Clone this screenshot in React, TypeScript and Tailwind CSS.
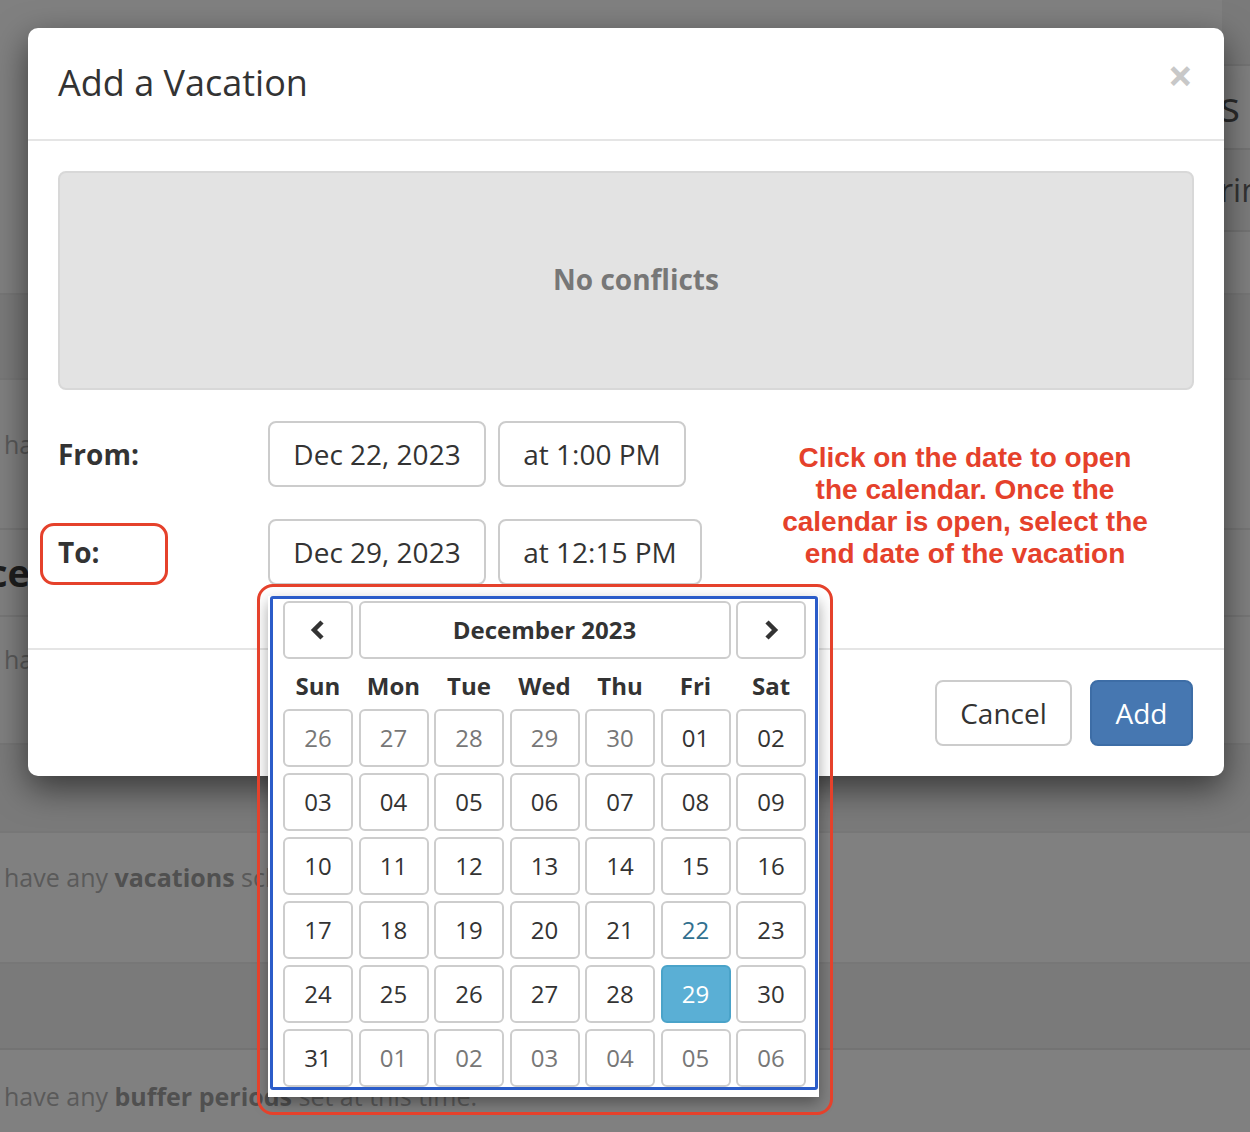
import React from 'react';

type Day = { n: string; muted?: boolean; from?: boolean; active?: boolean };

const weeks: Day[][] = [
  [{ n: '26', muted: true }, { n: '27', muted: true }, { n: '28', muted: true }, { n: '29', muted: true }, { n: '30', muted: true }, { n: '01' }, { n: '02' }],
  [{ n: '03' }, { n: '04' }, { n: '05' }, { n: '06' }, { n: '07' }, { n: '08' }, { n: '09' }],
  [{ n: '10' }, { n: '11' }, { n: '12' }, { n: '13' }, { n: '14' }, { n: '15' }, { n: '16' }],
  [{ n: '17' }, { n: '18' }, { n: '19' }, { n: '20' }, { n: '21' }, { n: '22', from: true }, { n: '23' }],
  [{ n: '24' }, { n: '25' }, { n: '26' }, { n: '27' }, { n: '28' }, { n: '29', active: true }, { n: '30' }],
  [{ n: '31' }, { n: '01', muted: true }, { n: '02', muted: true }, { n: '03', muted: true }, { n: '04', muted: true }, { n: '05', muted: true }, { n: '06', muted: true }],
];

const dayNames = ['Sun', 'Mon', 'Tue', 'Wed', 'Thu', 'Fri', 'Sat'];

function Chevron({ dir }: { dir: 'left' | 'right' }) {
  return (
    <svg width="16" height="22" viewBox="0 0 16 22">
      <polyline
        points={dir === 'left' ? '12,3 4,11 12,19' : '4,3 12,11 4,19'}
        fill="none"
        stroke="#333"
        strokeWidth="4.5"
        strokeLinejoin="miter"
      />
    </svg>
  );
}

function DayCell({ d }: { d: Day }) {
  let cls = 'border-[#cdcdcd] bg-white text-[#333]';
  if (d.muted) cls = 'border-[#cdcdcd] bg-white text-[#777]';
  if (d.from) cls = 'border-[#cdcdcd] bg-white text-[#31708f]';
  if (d.active) cls = 'border-[#4aa3c9] bg-[#5aafd5] text-white';
  return (
    <div className={`h-[58px] flex items-center justify-center rounded-[6px] border-2 text-[24px] ${cls}`}>
      {d.n}
    </div>
  );
}

function Calendar() {
  return (
    <div className="absolute left-[268px] top-[596px] w-[551px] bg-white pb-[7px] shadow-[0_6px_14px_rgba(0,0,0,0.35)]">
      <div className="ml-[2px] mr-[1px] border-[3px] border-[#2b5cc9] rounded-[3px] pt-[2px] pl-[10px] pr-[9px] pb-0">
        <div className="grid grid-cols-7 gap-x-[5.5px]">
          <div className="h-[58px] flex items-center justify-center rounded-[6px] border-2 border-[#cdcdcd]">
            <Chevron dir="left" />
          </div>
          <div className="col-span-5 h-[58px] flex items-center justify-center rounded-[6px] border-2 border-[#cdcdcd] text-[24px] font-bold text-[#333]">
            December 2023
          </div>
          <div className="h-[58px] flex items-center justify-center rounded-[6px] border-2 border-[#cdcdcd]">
            <Chevron dir="right" />
          </div>
        </div>
        <div className="grid grid-cols-7 gap-x-[5.5px] h-[50px] items-center">
          {dayNames.map((n) => (
            <div key={n} className="text-center text-[24px] font-bold text-[#333] pt-[3px]">{n}</div>
          ))}
        </div>
        <div className="grid grid-cols-7 gap-x-[5.5px] gap-y-[6px]">
          {weeks.flat().map((d, i) => (
            <DayCell key={i} d={d} />
          ))}
        </div>
      </div>
    </div>
  );
}

function Backdrop() {
  return (
    <div className="w-full bg-[#808080] text-[#5a5a5a] text-[25px]">
      {/* row 1 */}
      <div className="h-[295px] border-b-2 border-[#777] flex justify-end">
        <div className="w-[28px] flex flex-col">
          <div className="h-[66px] border-b-2 border-[#747474] bg-[#7a7a7a]" />
          <div className="h-[84px] border-b-2 border-[#747474] flex items-center text-[42px] text-[#2b2b2b] leading-none pb-[2px] -ml-[2px] overflow-hidden">s</div>
          <div className="h-[82px] border-b-2 border-[#747474] flex items-center text-[32px] text-[#333] -ml-[2px] overflow-hidden whitespace-nowrap bg-[#7c7c7c]">rin</div>
        </div>
      </div>
      <div className="h-[85px] border-b-2 border-[#777] bg-[#7a7a7a]" />
      <div className="h-[150px] border-b-2 border-[#777] flex items-center pl-[4px] pb-[18px] whitespace-nowrap overflow-hidden">have any</div>
      <div className="h-[87px] border-b-2 border-[#777] flex items-center whitespace-nowrap overflow-hidden">
        <div className="w-[30px] flex justify-end overflow-hidden text-[38px] font-bold text-[#1e1e1e]">Preference</div>
      </div>
      <div className="h-[128px] border-b-2 border-[#777] flex items-start pt-[24px] pl-[4px] whitespace-nowrap overflow-hidden">have any</div>
      <div className="h-[88px] border-b-2 border-[#777] bg-[#7a7a7a]" />
      <div className="h-[131px] border-b-2 border-[#777] flex items-start pt-[26px] pl-[4px] whitespace-nowrap overflow-hidden">
        have any&nbsp;<b className="text-[#505050]">vacations</b>&nbsp;scheduled at this time.
      </div>
      <div className="h-[86px] border-b-2 border-[#737373] bg-[#7a7a7a]" />
      <div className="h-[82px] flex items-start pt-[28px] pl-[4px] whitespace-nowrap overflow-hidden">
        have any&nbsp;<b className="text-[#505050]">buffer periods</b>&nbsp;set at this time.
      </div>
    </div>
  );
}

export default function App() {
  return (
    <div className="relative w-[1250px] h-[1132px] overflow-hidden" style={{ fontFamily: '"Open Sans", "Noto Sans", sans-serif' }}>
      <Backdrop />

      {/* modal */}
      <div className="absolute left-[28px] top-[28px] w-[1196px] bg-white rounded-[10px] shadow-[0_12px_34px_rgba(0,0,0,0.55)] text-[#333]">
        <div className="h-[113px] border-b-2 border-[#e5e5e5] flex items-center justify-between pl-[30px] pr-[30px] pb-[2px]">
          <h2 className="text-[36px] leading-none text-[#333]">Add a Vacation</h2>
          <span className="text-[44px] font-bold text-[#c8c8c8] leading-none -mt-[16px] mr-[1px]">×</span>
        </div>

        <div className="px-[30px] pt-[30px] pb-[63px]">
          <div className="h-[219px] rounded-[8px] border-2 border-[#d8d8d8] bg-[#e3e3e3] flex items-center justify-center text-[28px] font-bold text-[#777] pb-[4px] pl-[20px]">
            No conflicts
          </div>

          <div className="mt-[31px] flex items-center">
            <div className="w-[210px] text-[28px] font-bold">From:</div>
            <div className="flex gap-[12px]">
              <div className="w-[218px] h-[66px] border-2 border-[#ccc] rounded-[8px] flex items-center justify-center text-[28px]">Dec 22, 2023</div>
              <div className="w-[188px] h-[66px] border-2 border-[#ccc] rounded-[8px] flex items-center justify-center text-[28px]">at 1:00 PM</div>
            </div>
          </div>

          <div className="mt-[32px] flex items-center">
            <div className="w-[210px] text-[28px] font-bold">To:</div>
            <div className="flex gap-[12px]">
              <div className="w-[218px] h-[66px] border-2 border-[#ccc] rounded-[8px] flex items-center justify-center text-[28px]">Dec 29, 2023</div>
              <div className="w-[204px] h-[66px] border-2 border-[#ccc] rounded-[8px] flex items-center justify-center text-[28px]">at 12:15 PM</div>
            </div>
          </div>
        </div>

        <div className="border-t-2 border-[#e5e5e5] h-[128px] flex items-center justify-end gap-[18px] pr-[31px]">
          <div className="w-[137px] h-[66px] border-2 border-[#ccc] rounded-[8px] flex items-center justify-center text-[28px] text-[#333]">Cancel</div>
          <div className="w-[103px] h-[66px] border-2 border-[#3d6da6] bg-[#4677b1] rounded-[8px] flex items-center justify-center text-[28px] text-white">Add</div>
        </div>
      </div>

      {/* annotations */}
      <div className="absolute left-[40px] top-[523px] w-[128px] h-[62px] border-[3px] border-[#e5412b] rounded-[14px]" />

      <div
        className="absolute left-[760px] top-[442px] w-[410px] text-center text-[28px] font-bold leading-[32px] text-[#e5412b]"
        style={{ fontFamily: '"Liberation Sans", Arial, sans-serif' }}
      >
        Click on the date to open<br />the calendar. Once the<br />calendar is open, select the<br />end date of the vacation
      </div>

      <Calendar />

      <div className="absolute left-[257px] top-[584px] w-[576px] h-[531px] border-[3px] border-[#e5412b] rounded-[16px]" />
    </div>
  );
}
